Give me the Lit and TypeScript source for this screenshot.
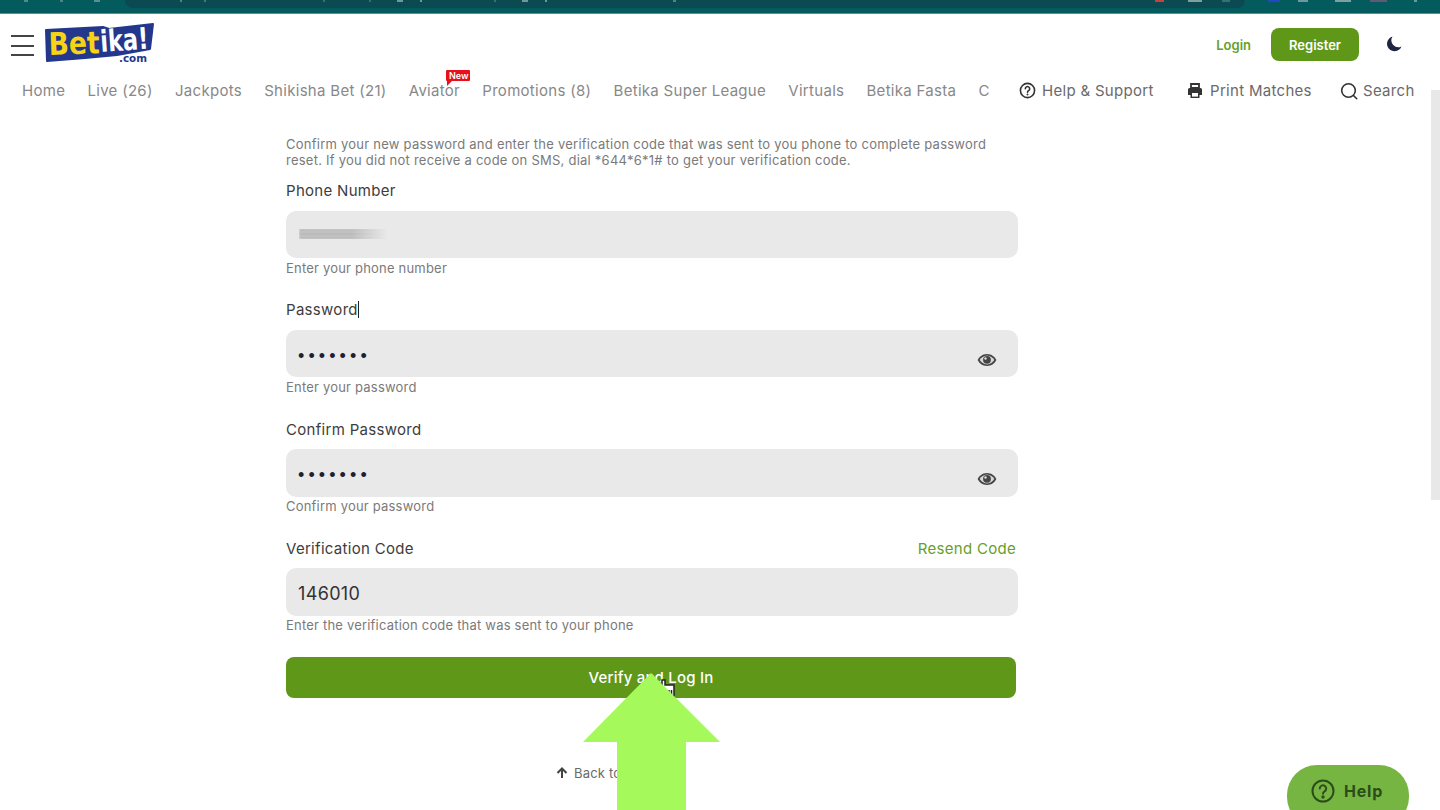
import { LitElement, html, css, svg } from "lit";
import { customElement } from "lit/decorators.js";

const eye = html`<svg class="eye" viewBox="0 0 20 14" width="20" height="14"><path d="M10 1C5.500 1 2 4 .6 7 2 10 5.500 13 10 13s8-3 9.400-6C18 4 14.500 1 10 1z" fill="#444"/><path d="M10 2.600C6.800 2.600 4 4.800 2.700 7 4 9.200 6.800 11.400 10 11.400S16 9.200 17.300 7C16 4.800 13.200 2.600 10 2.600z" fill="#d8d8d8"/><circle cx="10" cy="6.800" r="3.900" fill="#444"/><circle cx="8.500" cy="5.500" r="1.200" fill="#ddd"/></svg>`;

const q = html`<svg viewBox="0 0 18 18" width="17" height="17" fill="none" stroke="#333" stroke-width="1.700"><circle cx="9" cy="9" r="7.500"/><path d="M6.700 7.100a2.300 2.300 0 1 1 3.500 2c-.8.500-1.200.9-1.200 1.800" stroke-linecap="round"/><circle cx="9" cy="13.200" r=".6" fill="#333" stroke-width="1"/></svg>`;

const printer = html`<svg viewBox="0 0 16 16" width="16" height="16"><path d="M4 1h8v4H4z" fill="none" stroke="#333" stroke-width="1.800"/><path d="M2.500 5h11A1.500 1.500 0 0 1 15 6.500V12h-2.500v3h-9v-3H1V6.500A1.500 1.500 0 0 1 2.500 5z" fill="#333"/><rect x="5" y="10" width="6" height="3.600" fill="#fff"/></svg>`;

const searchIcon = html`<svg viewBox="0 0 18 18" width="18" height="18" fill="none" stroke="#333" stroke-width="1.600"><circle cx="8.500" cy="8.500" r="6.800"/><path d="M13.500 13.500l3.200 3.200" stroke-linecap="round"/></svg>`;

const logo = svg`<svg viewBox="0 0 110 42" width="110" height="42" class="logo">
  <path d="M1 6 L58 3 L64 5 L108 0 L105 25 L72 31 L40 34 L2 37 Z" fill="#23388c" stroke="#23388c" stroke-width="2" stroke-linejoin="round"/>
  <text x="4" y="31" font-family="'DejaVu Sans',sans-serif" font-weight="700" font-size="31" fill="#f6d313" textLength="51" lengthAdjust="spacingAndGlyphs" transform="rotate(-2 4 31)">Bet</text>
  <text x="56" y="28" font-family="'DejaVu Sans',sans-serif" font-weight="700" font-size="30" fill="#fff" textLength="48" lengthAdjust="spacingAndGlyphs" transform="rotate(-4 56 28)">ika!</text>
  <text x="74" y="38" font-family="'DejaVu Sans',sans-serif" font-weight="700" font-size="10" fill="#23388c" textLength="28" lengthAdjust="spacingAndGlyphs">.com</text>
</svg>`;

const ticks: [number, number, string][] = [
  [24, 4, "#4f8a8c"], [60, 3, "#4a8486"], [94, 6, "#5a9092"], [180, 2, "#4f8485"], [204, 2, "#437a7c"],
  [323, 2, "#357072"], [369, 2, "#357072"], [397, 6, "#6a9a9c"], [420, 2, "#6a9a9c"], [494, 2, "#357072"],
  [522, 6, "#6a9a9c"], [545, 2, "#6a9a9c"], [673, 3, "#4f8485"],
  [1155, 9, "#c8413a"], [1188, 14, "#7fa0a0"], [1222, 8, "#357072"], [1268, 12, "#2447c8"], [1298, 10, "#6a9a9c"],
  [1335, 16, "#7fa0a0"], [1370, 17, "#5e5a78"], [1414, 3, "#6a9a9c"],
];

@customElement("app-root")
export class AppRoot extends LitElement {
  static styles = css`
    :host { display: block; position: relative; height: 810px; overflow: hidden; background: #fff; font-family: Inter, "Liberation Sans", sans-serif; }
    .chrome { position: relative; height: 13px; background: #035b5e; border-bottom: 1px solid #5e8f90; padding-left: 125px; padding-right: 195px; }
    .url { height: 8px; background: #0a4a50; border-radius: 0 0 16px 16px; }
    .tick { position: absolute; top: 0; height: 2px; }
    .top { height: 61px; display: flex; align-items: center; padding: 0 0 0 11px; }
    .burger { width: 23px; display: flex; flex-direction: column; gap: 7.500px; margin-top: 2px; }
    .burger i { display: block; height: 2px; background: #444; }
    .logo { margin-left: 11px; margin-top: 1px; overflow: visible; }
    .spacer { flex: 1; }
    .login { font-size: 13px; font-weight: 600; color: #66a02a; margin-right: 20px; }
    .register { width: 88px; height: 33px; border-radius: 8px; background: #5f9819; color: #fff; font-size: 13px; font-weight: 600; display: flex; align-items: center; justify-content: center; }
    .moon { margin: 0 38px 2px 27px; display: flex; }
    .nav { height: 31px; display: flex; align-items: center; font-size: 15px; letter-spacing: .3px; color: #888; padding-left: 22px; }
    .links { display: flex; gap: 22.200px; white-space: nowrap; width: 975px; flex: none; }
    .linkswrap { position: relative; display: flex; }
    .badge { position: absolute; left: 424px; top: -11px; background: #e8101c; color: #fff; font-size: 9px; font-weight: 600; letter-spacing: 0; line-height: 11px; padding: 0 3px; border-radius: 1px; width: 18px; text-align: center; }
    .badge::after { content: ""; position: absolute; left: 1px; top: 11px; border-left: 5px solid #e8101c; border-bottom: 5px solid transparent; }
    .tools { display: flex; color: #6a6a6a; }
    .tool { display: flex; align-items: center; gap: 6px; white-space: nowrap; }
    .t1 { margin-left: 22px; width: 168px; }
    .t2 { width: 153px; gap: 7px; }
    .t3 { gap: 5px; }
    .form { width: 732px; margin: 0 0 0 286px; padding-top: 30px; }
    .intro { font-size: 13px; line-height: 16px; color: #7a7a7a; letter-spacing: .24px; width: 730px; margin: 0 0 13px; }
    .field { height: 119.300px; }
    .labelrow { display: flex; justify-content: space-between; font-size: 15px; letter-spacing: .3px; line-height: 20px; color: #3d3d3d; height: 20px; padding-right: 2px; }
    .caret { display: inline-block; width: 1px; height: 17px; background: #222; vertical-align: -3px; }
    .resend { color: #66a02a; }
    .box { position: relative; box-sizing: border-box; height: 47.500px; margin-top: 9.500px; padding: 2px 0 0 12px; background: #e9e9e9; border-radius: 10px; display: flex; align-items: center; font-size: 18px; letter-spacing: .35px; color: #333; }
    .dots { font-family: "Liberation Sans", sans-serif; font-size: 18px; letter-spacing: 4.100px; color: #1c2030; margin-top: 3px; }
    .blurred { width: 88px; height: 10px; margin: -2px 0 0 1px; background: repeating-linear-gradient(0deg, #aaa 0 2px, #d2d2d2 2px 4px); filter: blur(1px); -webkit-mask-image: linear-gradient(90deg, #000 60%, transparent); }
    .eye { position: absolute; right: 21px; top: 23px; }
    .help { font-size: 13px; line-height: 16px; color: #7a7a7a; margin-top: 1.500px; letter-spacing: .2px; }
    .submit { width: 730px; height: 41px; margin-top: -1px; background: #5f9819; border-radius: 8px; color: #fff; display: flex; align-items: center; justify-content: center; font-size: 15px; font-weight: 500; letter-spacing: .2px; }
    .back { display: flex; align-items: center; gap: 6px; font-size: 13px; letter-spacing: .2px; color: #6a6a6a; margin: 66px 0 0 270px; height: 18px; }
    .arrow { position: absolute; left: 583px; top: 673px; }
    .cursor { position: absolute; left: 660px; top: 679px; }
    .helpbtn { position: absolute; left: 1287px; top: 765px; width: 122px; height: 62px; background: #77b543; border-radius: 30px; display: flex; align-items: flex-start; gap: 9px; padding: 14px 0 0 24px; box-sizing: border-box; color: #2b4d1a; font-weight: 700; font-size: 16px; line-height: 24px; letter-spacing: .8px; }
    .scroll { position: absolute; right: 0; top: 90px; width: 9px; height: 410px; background: #e8e8e8; }
  `;

  private field(label: unknown, content: unknown, help: string, withEye = false, right?: string) {
    return html`<div class="field">
      <div class="labelrow"><span>${label}</span>${right ? html`<span class="resend">${right}</span>` : ""}</div>
      <div class="box">${content}${withEye ? eye : ""}</div>
      <div class="help">${help}</div>
    </div>`;
  }

  render() {
    return html`
      <div class="chrome">
        <div class="url"></div>
        ${ticks.map(([x, w, c]) => html`<span class="tick" style="left:${x}px;width:${w}px;background:${c}"></span>`)}
      </div>
      <div class="top">
        <div class="burger"><i></i><i></i><i></i></div>
        ${logo}
        <div class="spacer"></div>
        <span class="login">Login</span>
        <div class="register">Register</div>
        <div class="moon"><svg viewBox="0 0 16 16" width="16" height="16"><path d="M6.500.5a7.500 7.500 0 1 0 9 10A7 7 0 0 1 6.500.5z" fill="#1f2540"/></svg></div>
      </div>
      <div class="nav">
        <div class="linkswrap">
          <div class="links">
            <span>Home</span><span>Live (26)</span><span>Jackpots</span><span>Shikisha Bet (21)</span><span>Aviator</span><span>Promotions (8)</span><span>Betika Super League</span><span>Virtuals</span><span>Betika Fasta</span><span>C</span>
          </div>
          <span class="badge">New</span>
        </div>
        <div class="tools">
          <div class="tool t1">${q}<span>Help &amp; Support</span></div>
          <div class="tool t2">${printer}<span>Print Matches</span></div>
          <div class="tool t3">${searchIcon}<span>Search</span></div>
        </div>
      </div>
      <div class="form">
        <p class="intro">Confirm your new password and enter the verification code that was sent to you phone to complete password reset. If you did not receive a code on SMS, dial *644*6*1# to get your verification code.</p>
        ${this.field("Phone Number", html`<div class="blurred"></div>`, "Enter your phone number")}
        ${this.field(html`Password<span class="caret"></span>`, html`<span class="dots">•••••••</span>`, "Enter your password", true)}
        ${this.field("Confirm Password", html`<span class="dots">•••••••</span>`, "Confirm your password", true)}
        ${this.field("Verification Code", "146010", "Enter the verification code that was sent to your phone", false, "Resend Code")}
        <div class="submit">Verify and Log In</div>
        <div class="back"><svg viewBox="0 0 12 12" width="12" height="12"><path d="M6 11V2M1.500 6 6 1.500 10.500 6" fill="none" stroke="#444" stroke-width="2"/></svg><span>Back to Login</span></div>
      </div>
      <div class="scroll"></div>
      <svg class="cursor" width="17" height="18" viewBox="0 0 17 18"><path d="M2 1h3v5h9v11H5L2 9z" fill="#fff" stroke="#222" stroke-width="1.500"/><path d="M9 11v5M11.500 11v5" stroke="#222" stroke-width="1.500"/></svg>
      <svg class="arrow" width="138" height="137" viewBox="0 0 138 137"><path d="M0 69 68 0 137 69H103V137H34V69Z" fill="#a6f95a"/></svg>
      <div class="helpbtn"><svg viewBox="0 0 24 24" width="24" height="24" fill="none" stroke="#2b4d1a" stroke-width="2"><circle cx="12" cy="12" r="10.500"/><path d="M8.800 9.500a3.200 3.200 0 1 1 4.800 2.800c-1 .6-1.600 1.200-1.600 2.400" stroke-linecap="round"/><circle cx="12" cy="18" r=".7" fill="#2b4d1a"/></svg><span>Help</span></div>
    `;
  }
}
